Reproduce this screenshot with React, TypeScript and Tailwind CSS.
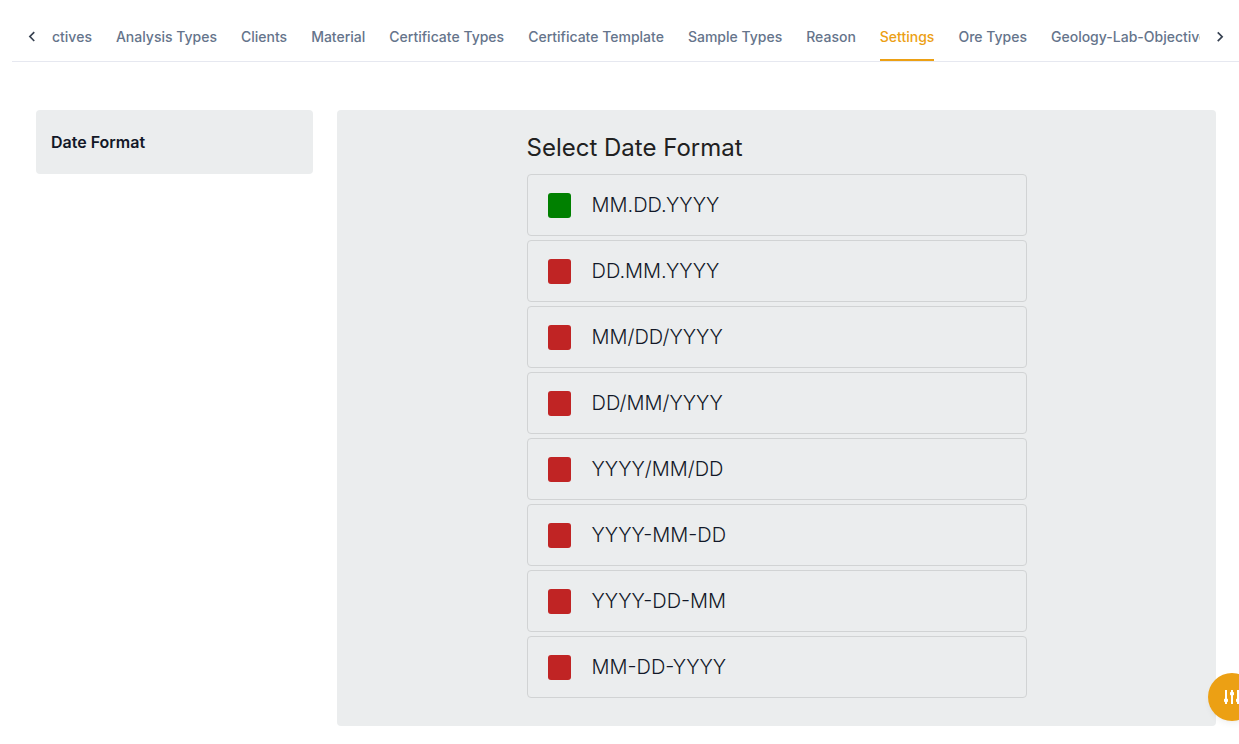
import { useState } from "react";
import clsx from "clsx";

const tabs = [
  "ctives",
  "Analysis Types",
  "Clients",
  "Material",
  "Certificate Types",
  "Certificate Template",
  "Sample Types",
  "Reason",
  "Settings",
  "Ore Types",
  "Geology-Lab-Objectives",
];

const formats = [
  "MM.DD.YYYY",
  "DD.MM.YYYY",
  "MM/DD/YYYY",
  "DD/MM/YYYY",
  "YYYY/MM/DD",
  "YYYY-MM-DD",
  "YYYY-DD-MM",
  "MM-DD-YYYY",
];

function Chevron({ direction }: { direction: "left" | "right" }) {
  return (
    <svg viewBox="0 0 24 24" className="size-5" fill="currentColor" aria-hidden="true">
      {direction === "left" ? (
        <path d="M15.41 16.09 10.83 11.5l4.58-4.59L14 5.5l-6 6 6 6z" />
      ) : (
        <path d="M8.59 16.34l4.58-4.59-4.58-4.59L10 5.75l6 6-6 6z" />
      )}
    </svg>
  );
}

function TabBar({ active, onSelect }: { active: string; onSelect: (tab: string) => void }) {
  return (
    <nav className="ml-3 flex h-[62px] items-stretch border-b border-[#e6e8f0] pt-3" aria-label="Sections">
      <button type="button" aria-label="Scroll left" className="flex w-10 shrink-0 items-center justify-center text-[#374151]">
        <Chevron direction="left" />
      </button>
      <div className="flex min-w-0 flex-1 gap-6 overflow-hidden" role="tablist">
        {tabs.map((tab) => (
          <button
            key={tab}
            type="button"
            role="tab"
            aria-selected={tab === active}
            onClick={() => onSelect(tab)}
            className={clsx(
              "shrink-0 border-b-2 pt-0.5 text-sm font-medium whitespace-nowrap",
              tab === active ? "border-[#eca014] text-[#eca014]" : "border-transparent text-[#65748b]",
            )}
          >
            {tab}
          </button>
        ))}
      </div>
      <button type="button" aria-label="Scroll right" className="flex w-[39px] shrink-0 items-center justify-center text-[#374151]">
        <Chevron direction="right" />
      </button>
    </nav>
  );
}

function SlidersIcon() {
  return (
    <svg viewBox="0 0 24 24" className="size-6" fill="currentColor" aria-hidden="true">
      <path d="M5 5h2v8.5l1 .7v2.2l-1 .8V19H5v-1.800l-1-.8v-2.200l1-.7z" />
      <path d="M11 5h2v1.800l1 .8v2.200l-1 .7V19h-2v-8.500l-1-.7V7.600l1-.8z" />
      <path d="M17 5h2v8.500l1 .7v2.200l-1 .8V19h-2v-1.800l-1-.8v-2.200l1-.7z" />
    </svg>
  );
}

export default function App() {
  const [activeTab, setActiveTab] = useState("Settings");
  const [selected, setSelected] = useState("MM.DD.YYYY");

  return (
    <div className="min-h-screen overflow-x-hidden bg-white font-['Inter',sans-serif] text-[#121828]">
      <TabBar active={activeTab} onSelect={setActiveTab} />

      <main className="grid grid-cols-12 items-start gap-6 pt-12 pr-[23px] pb-4 pl-9">
        <aside className="col-span-3">
          <button type="button" className="flex h-16 w-full items-center rounded bg-[#ebedee] px-[15px] text-left text-base font-semibold">
            Date Format
          </button>
        </aside>

        <section className="col-span-9 rounded bg-[#ebedee] px-4 pt-5 pb-7">
          <div className="mx-auto max-w-[500px]">
            <h1 className="mb-2 text-2xl leading-9 text-[#212121]">Select Date Format</h1>
            <div className="flex flex-col gap-1">
              {formats.map((format) => (
                <button
                  key={format}
                  type="button"
                  aria-pressed={format === selected}
                  onClick={() => setSelected(format)}
                  className="flex h-[62px] items-center gap-[21px] rounded border border-[#d1d3d4] px-5 text-left text-xl font-light"
                >
                  <span
                    className={clsx(
                      "h-[25px] w-[23px] rounded-[3px]",
                      format === selected ? "bg-[#008000]" : "bg-[#c02424]",
                    )}
                  />
                  {format}
                </button>
              ))}
            </div>
          </div>
        </section>
      </main>

      <button
        type="button"
        aria-label="Open settings"
        className="fixed -right-[17px] bottom-[23px] flex size-12 items-center justify-center rounded-full bg-[#eca014] text-white shadow-md shadow-black/5"
      >
        <SlidersIcon />
      </button>
    </div>
  );
}
